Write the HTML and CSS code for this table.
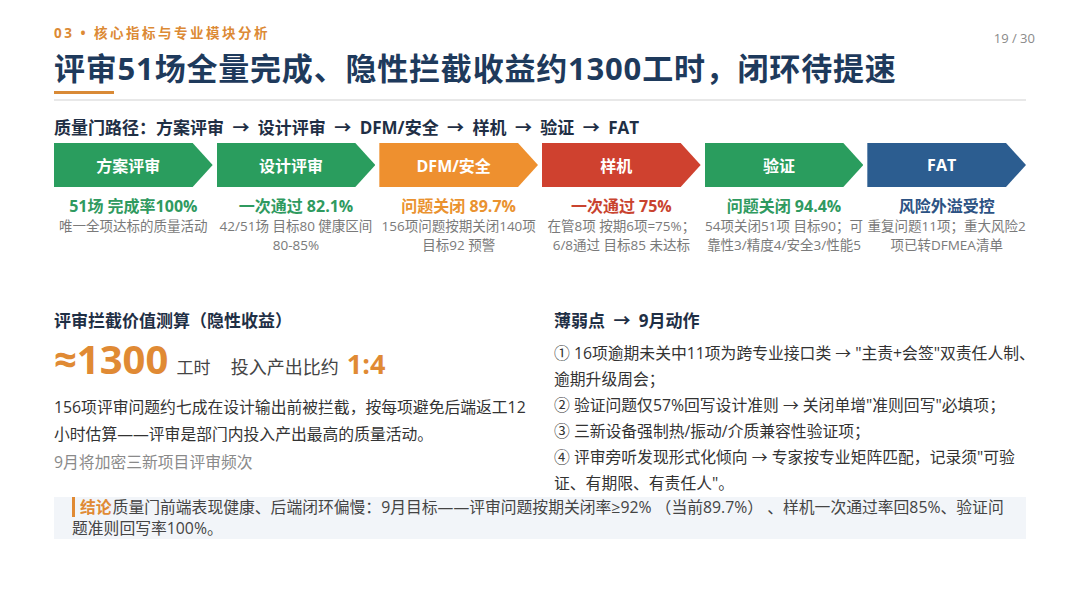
FILE: index.html
```html
<!DOCTYPE html>
<html lang="zh-CN">
<head>
<meta charset="utf-8">
<title>评审51场全量完成</title>
<link rel="stylesheet" href="styles.css">
</head>
<body>
<div class="slide">
  <div class="topbar">
    <div class="kicker">03 • 核心指标与专业模块分析</div>
    <div class="pageno">19 / 30</div>
  </div>
  <h1 class="title">评审51场全量完成、隐性拦截收益约1300工时，闭环待提速</h1>
  <div class="title-accent"></div>
  <div class="divider"></div>

  <div class="path-head">质量门路径：方案评审 <span class="arr">→</span> 设计评审 <span class="arr">→</span> DFM/安全 <span class="arr">→</span> 样机 <span class="arr">→</span> 验证 <span class="arr">→</span> FAT</div>

  <div class="stages">
    <div class="chev green">方案评审</div>
    <div class="chev green">设计评审</div>
    <div class="chev orange">DFM/安全</div>
    <div class="chev red">样机</div>
    <div class="chev green">验证</div>
    <div class="chev blue">FAT</div>
  </div>

  <div class="stats">
    <div class="stat">
      <div class="stat-key t-green">51场 完成率100%</div>
      <div class="stat-sub">唯一全项达标的质量活动</div>
    </div>
    <div class="stat">
      <div class="stat-key t-green">一次通过 82.1%</div>
      <div class="stat-sub">42/51场 目标80 健康区间 80-85%</div>
    </div>
    <div class="stat">
      <div class="stat-key t-orange">问题关闭 89.7%</div>
      <div class="stat-sub">156项问题按期关闭140项 目标92 预警</div>
    </div>
    <div class="stat">
      <div class="stat-key t-red">一次通过 75%</div>
      <div class="stat-sub">在管8项 按期6项=75%； 6/8通过 目标85 未达标</div>
    </div>
    <div class="stat">
      <div class="stat-key t-green">问题关闭 94.4%</div>
      <div class="stat-sub">54项关闭51项 目标90；可靠性3/精度4/安全3/性能5</div>
    </div>
    <div class="stat">
      <div class="stat-key t-blue">风险外溢受控</div>
      <div class="stat-sub">重复问题11项；重大风险2项已转DFMEA清单</div>
    </div>
  </div>

  <div class="lower">
    <section class="col">
      <h2 class="sec-head">评审拦截价值测算（隐性收益）</h2>
      <div class="big-row">
        <span class="big-num">≈1300</span>
        <span class="big-unit">工时</span>
        <span class="big-label">投入产出比约</span>
        <span class="big-ratio">1:4</span>
      </div>
      <p class="para">156项评审问题约七成在设计输出前被拦截，按每项避免后端返工12小时估算——评审是部门内投入产出最高的质量活动。</p>
      <p class="note">9月将加密三新项目评审频次</p>
    </section>
    <section class="col">
      <h2 class="sec-head">薄弱点 <span class="arr">→</span> 9月动作</h2>
      <ul class="actions">
        <li>① 16项逾期未关中11项为跨专业接口类 → "主责+会签"双责任人制、逾期升级周会；</li>
        <li>② 验证问题仅57%回写设计准则 → 关闭单增"准则回写"必填项；</li>
        <li>③ 三新设备强制热/振动/介质兼容性验证项；</li>
        <li>④ 评审旁听发现形式化倾向 → 专家按专业矩阵匹配，记录须"可验证、有期限、有责任人"。</li>
      </ul>
    </section>
  </div>

  <div class="conclusion"><span class="tag">结论</span>质量门前端表现健康、后端闭环偏慢：9月目标——评审问题按期关闭率≥92% （当前89.7%） 、样机一次通过率回85%、验证问题准则回写率100%。</div>
</div>
</body>
</html>
```

FILE: styles.css
```css
* { box-sizing: border-box; }
html, body { margin: 0; padding: 0; background: #ffffff; }
body {
  font-family: "Open Sans", "Noto Sans CJK SC", sans-serif;
  color: #333333;
}
.slide {
  width: 1080px;
  height: 608px;
  padding: 0 54px;
  overflow: hidden;
}
.topbar {
  display: flex;
  justify-content: space-between;
  align-items: flex-start;
  padding-top: 25px;
}
.kicker {
  font-size: 13.5px;
  line-height: 16px;
  font-weight: 700;
  color: #dc8a35;
  letter-spacing: 2.5px;
}
.pageno {
  font-size: 13px;
  line-height: 16px;
  color: #8a8a8a;
  margin-top: 5px;
  margin-right: -9px;
}
.title {
  margin: 3px 0 0;
  font-size: 31px;
  line-height: 38px;
  font-weight: 700;
  color: #1e3a5c;
  letter-spacing: 0.8px;
}
.title-accent {
  width: 60px;
  height: 3px;
  background: #d98a36;
  margin-top: 4px;
}
.divider {
  height: 2px;
  background: #e8e8e8;
  margin-top: 5px;
}
.path-head {
  margin-top: 16px;
  font-size: 17px;
  line-height: 22px;
  font-weight: 700;
  color: #1f2f45;
}
.arr { margin: 0 4px; }
.stages {
  display: grid;
  grid-template-columns: repeat(6, 1fr);
  column-gap: 4px;
  margin-top: 4px;
}
.chev {
  height: 44px;
  display: flex;
  align-items: center;
  justify-content: center;
  padding-right: 10px;
  color: #ffffff;
  font-size: 16px;
  font-weight: 700;
  clip-path: polygon(0 0, calc(100% - 20px) 0, 100% 50%, calc(100% - 20px) 100%, 0 100%);
}
.green { background: #2a9d5e; }
.orange { background: #ee902f; }
.red { background: #cf412f; }
.blue { background: #2c5d90; }

.stats {
  display: grid;
  grid-template-columns: repeat(6, 1fr);
  column-gap: 4px;
  margin-top: 8px;
}
.stat { text-align: center; }
.stat-key {
  font-size: 16px;
  line-height: 22px;
  font-weight: 700;
}
.t-green { color: #2f9a5f; }
.t-orange { color: #ea922f; }
.t-red { color: #c9432f; }
.t-blue { color: #2c5283; }
.stat-sub {
  font-size: 13.5px;
  line-height: 19px;
  color: #7a7a7a;
}

.lower {
  display: grid;
  grid-template-columns: 480px 1fr;
  column-gap: 20px;
  margin-top: 55px;
  margin-right: -14px;
}
.sec-head {
  margin: 0;
  font-size: 17px;
  line-height: 22px;
  font-weight: 700;
  color: #1f2f45;
}
.big-row {
  margin-top: 5px;
  height: 44px;
  line-height: 44px;
  white-space: nowrap;
}
.big-num {
  font-size: 40px;
  font-weight: 700;
  color: #e08a34;
}
.big-unit {
  font-size: 17px;
  color: #444444;
  margin-left: 4px;
}
.big-label {
  font-size: 18px;
  color: #444444;
  margin-left: 16px;
}
.big-ratio {
  font-size: 27px;
  font-weight: 700;
  color: #e08a34;
  margin-left: 4px;
}
.para {
  margin: 13px 0 0;
  font-size: 15.8px;
  line-height: 27px;
  color: #333333;
}
.note {
  margin: 1px 0 0;
  font-size: 15.8px;
  line-height: 27px;
  color: #8a8a8a;
}
.actions {
  list-style: none;
  margin: 8px 0 0;
  padding: 0;
  font-size: 15.8px;
  line-height: 26px;
  color: #333333;
}
.conclusion {
  margin-top: 1px;
  background: #f2f5f9;
  padding: 0 18px;
  font-size: 15.8px;
  line-height: 21px;
  color: #444444;
}
.tag {
  display: inline-block;
  vertical-align: top;
  line-height: 20px;
  height: 20px;
  border-left: 3px solid #e08a34;
  padding-left: 5px;
  margin-right: 1px;
  color: #e08a34;
  font-weight: 700;
}
```
